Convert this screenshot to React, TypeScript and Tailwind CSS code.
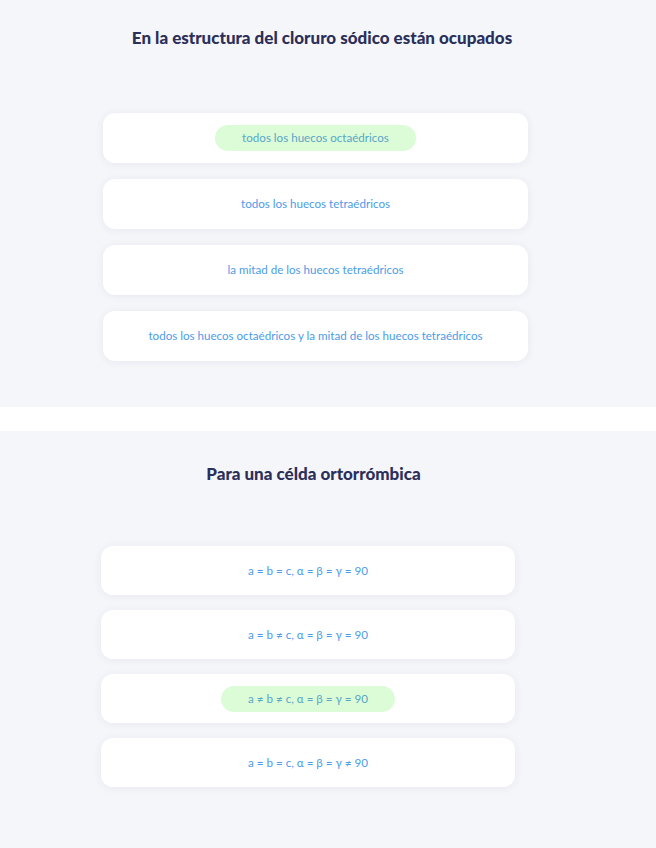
const Option = ({ text, correct, h }: { text: string; correct?: boolean; h: string }) => (
  <div className={`${h} bg-white rounded-xl shadow-[0_1px_8px_rgba(40,50,90,0.07)] flex items-center justify-center`}>
    {correct ? (
      <span className="bg-[#dcfcd8] text-[#58a6c6] rounded-full h-[26px] px-[27px] flex items-center">{text}</span>
    ) : (
      <span className="text-[#4c9ce8]">{text}</span>
    )}
  </div>
);

const App = () => {
  const first = [
    { text: "todos los huecos octaédricos", correct: true },
    { text: "todos los huecos tetraédricos" },
    { text: "la mitad de los huecos tetraédricos" },
    { text: "todos los huecos octaédricos y la mitad de los huecos tetraédricos" },
  ];
  const second = [
    { text: "a = b = c, α = β = γ = 90" },
    { text: "a = b ≠ c, α = β = γ = 90" },
    { text: "a ≠ b ≠ c, α = β = γ = 90", correct: true },
    { text: "a = b = c, α = β = γ ≠ 90" },
  ];

  return (
    <div className="w-[656px] h-[848px] bg-white font-['Lato','Noto_Sans',sans-serif] text-[11.6px] overflow-hidden">
      <section className="bg-[#f5f6fa] pt-[28px] pb-[46px]">
        <h2 className="ml-[103px] w-[438px] text-center text-[17px] leading-[20px] font-black text-[#2b2f5a]">
          En la estructura del cloruro sódico están ocupados
        </h2>
        <div className="ml-[103px] w-[425px] mt-[65px] flex flex-col gap-4">
          {first.map((o) => (
            <Option key={o.text} text={o.text} correct={o.correct} h="h-[50px]" />
          ))}
        </div>
      </section>
      <div className="h-[24px] bg-white" />
      <section className="bg-[#f5f6fa] pt-[33px] h-[418px]">
        <h2 className="ml-[101px] w-[425px] text-center text-[17px] leading-[20px] font-black text-[#2b2f5a]">
          Para una célda ortorrómbica
        </h2>
        <div className="ml-[101px] w-[414px] mt-[62px] flex flex-col gap-[15px]">
          {second.map((o) => (
            <Option key={o.text} text={o.text} correct={o.correct} h="h-[49px]" />
          ))}
        </div>
      </section>
    </div>
  );
};

export default App;
